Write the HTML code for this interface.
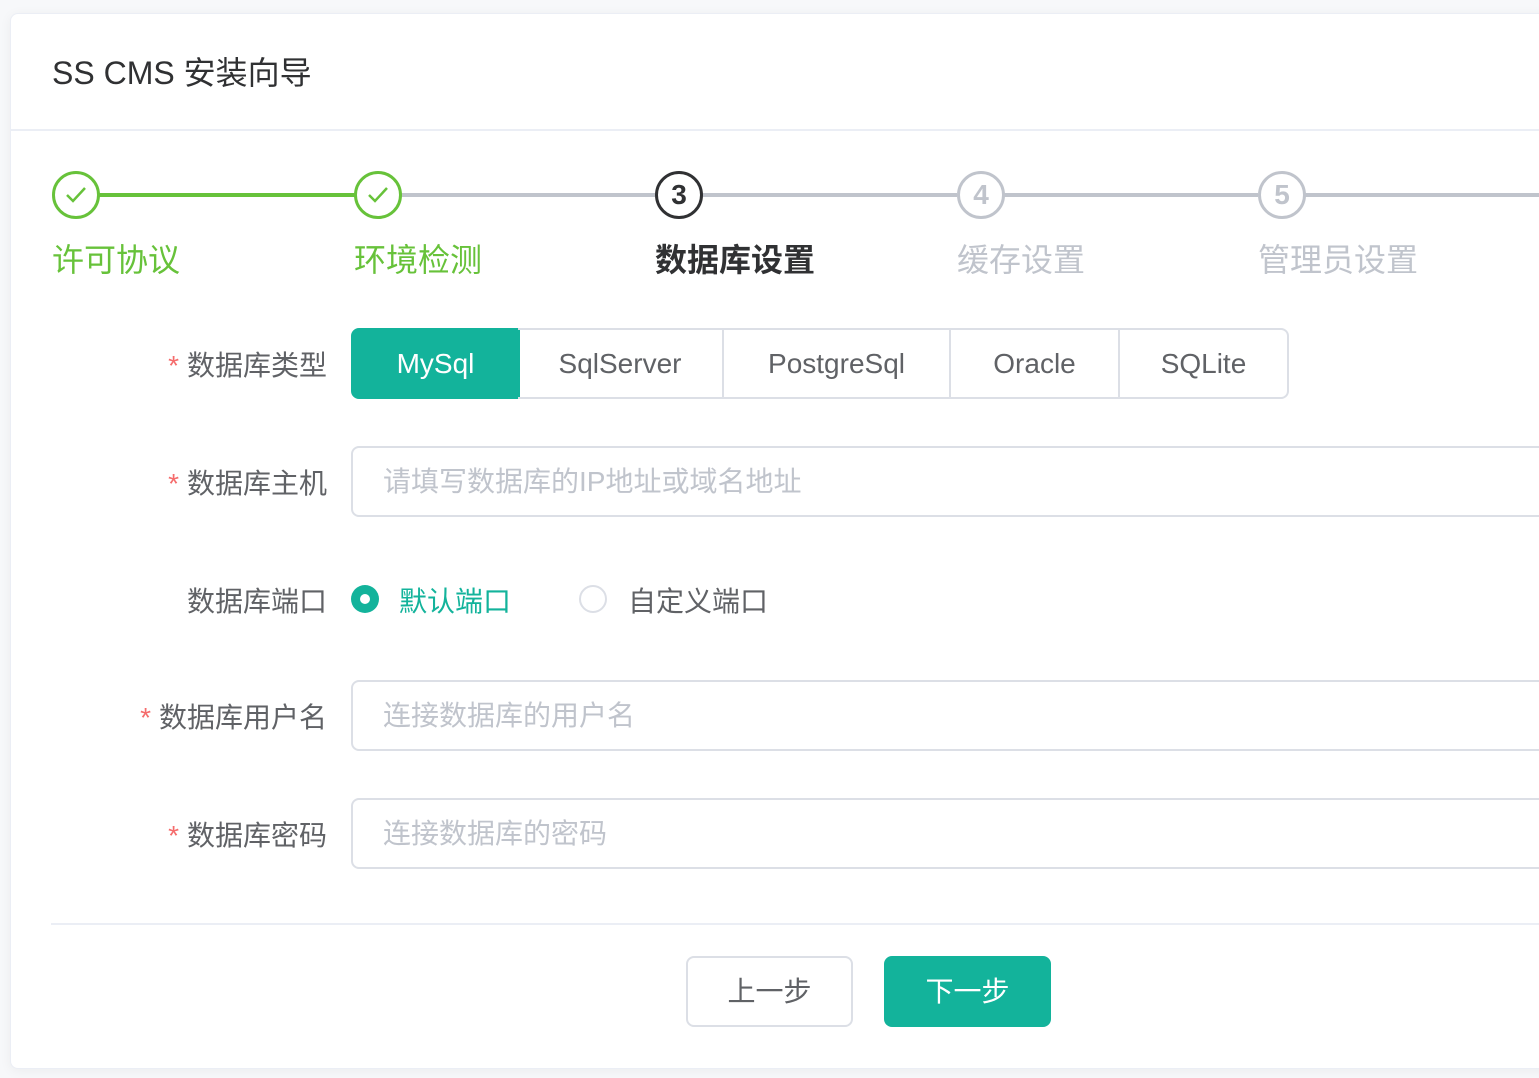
<!DOCTYPE html><html><head><meta charset="utf-8"><style>
body{margin:0;width:1539px;height:1078px;background:#f7f8fa;overflow:hidden;font-family:"Liberation Sans","Noto Sans CJK SC",sans-serif;position:relative}
.card{position:absolute;left:10px;top:13px;width:1560px;height:1054px;background:#fff;border:1px solid #ebeef5;border-radius:8px;box-shadow:0 2px 12px rgba(0,0,0,.05)}
.a{position:absolute}
.hdr{left:41px;top:34px;font-size:32px;color:#303133}
.hline{left:0;top:115px;width:1600px;height:2px;background:#ebeef5}
.c{position:absolute;width:42px;height:42px;border:3px solid;border-radius:50%;box-sizing:content-box;text-align:center;line-height:42px;font-size:28px;font-weight:bold}
.ln{position:absolute;height:4px;top:179px}
.sl{position:absolute;top:221px;font-size:32px}
.lab{position:absolute;left:0;width:316px;text-align:right;font-size:28px;color:#606266;white-space:nowrap}
.lab i{color:#f56c6c;font-style:normal;margin-right:8px}
.inp{position:absolute;left:340px;width:1300px;height:67px;border:2px solid #dcdfe6;border-radius:8px;font-size:28px;color:#c0c4cc;line-height:67px;padding-left:30px;box-sizing:content-box}
.seg{position:absolute;top:314px;height:67px;border:2px solid #dcdfe6;font-size:28px;color:#606266;text-align:center;line-height:67px;box-sizing:content-box}
.btn{position:absolute;top:942px;width:163px;height:67px;border-radius:8px;font-size:28px;text-align:center;line-height:67px}
</style></head><body>
<div class="card">
<div class="a hdr">SS CMS 安装向导</div>
<div class="a hline"></div>
<div class="ln" style="left:88px;width:256px;background:#67c23a"></div>
<div class="ln" style="left:390px;width:254px;background:#c0c4cc"></div>
<div class="ln" style="left:691px;width:255px;background:#c0c4cc"></div>
<div class="ln" style="left:993px;width:254px;background:#c0c4cc"></div>
<div class="ln" style="left:1294px;width:300px;background:#c0c4cc"></div>
<div class="c" style="left:41px;top:157px;border-color:#67c23a;color:#67c23a"><svg width="24" height="24" viewBox="0 0 24 24" style="margin-top:9px"><path d="M3 12l6 6L21 5" fill="none" stroke="#67c23a" stroke-width="2.5"/></svg></div>
<div class="c" style="left:343px;top:157px;border-color:#67c23a;color:#67c23a"><svg width="24" height="24" viewBox="0 0 24 24" style="margin-top:9px"><path d="M3 12l6 6L21 5" fill="none" stroke="#67c23a" stroke-width="2.5"/></svg></div>
<div class="c" style="left:644px;top:157px;border-color:#303133;color:#303133">3</div>
<div class="c" style="left:946px;top:157px;border-color:#c0c4cc;color:#c0c4cc">4</div>
<div class="c" style="left:1247px;top:157px;border-color:#c0c4cc;color:#c0c4cc">5</div>
<div class="sl" style="left:41px;color:#67c23a">许可协议</div>
<div class="sl" style="left:343px;color:#67c23a">环境检测</div>
<div class="sl" style="left:644px;color:#303133;font-weight:bold">数据库设置</div>
<div class="sl" style="left:946px;color:#c0c4cc">缓存设置</div>
<div class="sl" style="left:1247px;color:#c0c4cc">管理员设置</div>

<div class="lab" style="top:330px"><i>*</i>数据库类型</div>
<div class="seg" style="left:340px;width:165px;background:#13b39b;border-color:#13b39b;color:#fff;border-radius:8px 0 0 8px">MySql</div>
<div class="seg" style="left:507px;width:204px;border-left:none">SqlServer</div>
<div class="seg" style="left:713px;width:225px;border-left:none">PostgreSql</div>
<div class="seg" style="left:940px;width:167px;border-left:none">Oracle</div>
<div class="seg" style="left:1109px;width:167px;border-left:none;border-radius:0 8px 8px 0">SQLite</div>

<div class="lab" style="top:448px"><i>*</i>数据库主机</div>
<div class="inp" style="top:432px">请填写数据库的IP地址或域名地址</div>

<div class="lab" style="top:566px">数据库端口</div>
<div class="a" style="left:340px;top:571px;width:28px;height:28px;border-radius:50%;background:#13b39b"><div style="margin:9px;width:10px;height:10px;border-radius:50%;background:#fff"></div></div>
<div class="a" style="left:388px;top:566px;font-size:28px;color:#13b39b">默认端口</div>
<div class="a" style="left:568px;top:571px;width:24px;height:24px;border-radius:50%;border:2px solid #dcdfe6"></div>
<div class="a" style="left:617px;top:566px;font-size:28px;color:#606266">自定义端口</div>

<div class="lab" style="top:682px"><i>*</i>数据库用户名</div>
<div class="inp" style="top:666px">连接数据库的用户名</div>

<div class="lab" style="top:800px"><i>*</i>数据库密码</div>
<div class="inp" style="top:784px">连接数据库的密码</div>

<div class="a" style="left:40px;top:909px;width:1600px;height:2px;background:#ebeef5"></div>
<div class="btn" style="left:675px;border:2px solid #dcdfe6;color:#606266;box-sizing:content-box;width:163px;height:67px">上一步</div>
<div class="btn" style="left:873px;width:167px;height:71px;line-height:71px;background:#13b39b;color:#fff">下一步</div>
</div>
</body></html>
